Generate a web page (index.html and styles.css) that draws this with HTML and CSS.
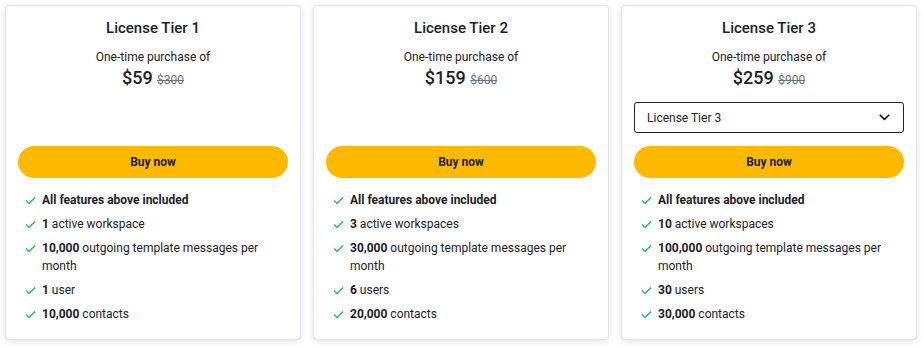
FILE: index.html
```html
<!DOCTYPE html>
<html lang="en">
<head>
    <meta charset="UTF-8">
    <title>License Tiers</title>
    <link rel="stylesheet" href="styles.css">
</head>
<body>
    <div class="tiers">
        <div class="tier">
            <h2 class="tier-title">License Tier 1</h2>
            <p class="tier-sub">One-time purchase of</p>
            <div class="tier-price">$59 <s>$300</s></div>
            <div class="tier-slot"></div>
            <button class="buy">Buy now</button>
            <ul class="features">
                <li><svg class="tick" viewBox="0 0 11 9"><path d="M1 4.6 4 7.6 10 1.4"/></svg><span><b>All features above included</b></span></li>
                <li><svg class="tick" viewBox="0 0 11 9"><path d="M1 4.6 4 7.6 10 1.4"/></svg><span><b>1</b> active workspace</span></li>
                <li><svg class="tick" viewBox="0 0 11 9"><path d="M1 4.6 4 7.6 10 1.4"/></svg><span><b>10,000</b> outgoing template messages per month</span></li>
                <li><svg class="tick" viewBox="0 0 11 9"><path d="M1 4.6 4 7.6 10 1.4"/></svg><span><b>1</b> user</span></li>
                <li><svg class="tick" viewBox="0 0 11 9"><path d="M1 4.6 4 7.6 10 1.4"/></svg><span><b>10,000</b> contacts</span></li>
            </ul>
        </div>

        <div class="tier">
            <h2 class="tier-title">License Tier 2</h2>
            <p class="tier-sub">One-time purchase of</p>
            <div class="tier-price">$159 <s>$600</s></div>
            <div class="tier-slot"></div>
            <button class="buy">Buy now</button>
            <ul class="features">
                <li><svg class="tick" viewBox="0 0 11 9"><path d="M1 4.6 4 7.6 10 1.4"/></svg><span><b>All features above included</b></span></li>
                <li><svg class="tick" viewBox="0 0 11 9"><path d="M1 4.6 4 7.6 10 1.4"/></svg><span><b>3</b> active workspaces</span></li>
                <li><svg class="tick" viewBox="0 0 11 9"><path d="M1 4.6 4 7.6 10 1.4"/></svg><span><b>30,000</b> outgoing template messages per month</span></li>
                <li><svg class="tick" viewBox="0 0 11 9"><path d="M1 4.6 4 7.6 10 1.4"/></svg><span><b>6</b> users</span></li>
                <li><svg class="tick" viewBox="0 0 11 9"><path d="M1 4.6 4 7.6 10 1.4"/></svg><span><b>20,000</b> contacts</span></li>
            </ul>
        </div>

        <div class="tier">
            <h2 class="tier-title">License Tier 3</h2>
            <p class="tier-sub">One-time purchase of</p>
            <div class="tier-price">$259 <s>$900</s></div>
            <div class="tier-slot">
                <div class="picker">
                    <span>License Tier 3</span>
                    <svg width="11" height="7" viewBox="0 0 11 7"><path d="M1.2 1.2 5.5 5.4l4.3-4.2" fill="none" stroke="#111" stroke-width="1.6" stroke-linecap="round" stroke-linejoin="round"/></svg>
                </div>
            </div>
            <button class="buy">Buy now</button>
            <ul class="features">
                <li><svg class="tick" viewBox="0 0 11 9"><path d="M1 4.6 4 7.6 10 1.4"/></svg><span><b>All features above included</b></span></li>
                <li><svg class="tick" viewBox="0 0 11 9"><path d="M1 4.6 4 7.6 10 1.4"/></svg><span><b>10</b> active workspaces</span></li>
                <li><svg class="tick" viewBox="0 0 11 9"><path d="M1 4.6 4 7.6 10 1.4"/></svg><span><b>100,000</b> outgoing template messages per month</span></li>
                <li><svg class="tick" viewBox="0 0 11 9"><path d="M1 4.6 4 7.6 10 1.4"/></svg><span><b>30</b> users</span></li>
                <li><svg class="tick" viewBox="0 0 11 9"><path d="M1 4.6 4 7.6 10 1.4"/></svg><span><b>30,000</b> contacts</span></li>
            </ul>
        </div>
    </div>
</body>
</html>
```

FILE: styles.css
```css
:root {
    --text: #1b2128;
    --muted: #6b7280;
    --yellow: #ffba00;
    --green: #22c55e;
    --border: #e4e4ec;
}

* {
    margin: 0;
    padding: 0;
    box-sizing: border-box;
    font-family: Roboto, "Liberation Sans", sans-serif;
}

body {
    background: #fff;
    color: var(--text);
    padding: 5px;
}

.tiers {
    display: grid;
    grid-template-columns: repeat(3, 296px);
    gap: 12px;
}

.tier {
    background: #fff;
    border: 1px solid var(--border);
    border-radius: 4px;
    box-shadow: 0 2px 6px rgba(40, 40, 80, 0.12);
    padding: 12px 12px 0;
    display: flex;
    flex-direction: column;
    height: 335px;
}

.tier > * {
    flex-shrink: 0;
}

.tier-title {
    text-align: center;
    font-size: 15px;
    font-weight: 500;
    line-height: 20px;
    margin-bottom: 10px;
}

.tier-sub {
    text-align: center;
    font-size: 12px;
    line-height: 18px;
}

.tier-price {
    text-align: center;
    font-size: 18px;
    font-weight: 500;
    line-height: 24px;
}

.tier-price s {
    font-size: 12px;
    font-weight: 400;
    color: var(--muted);
}

.tier-slot {
    height: 31px;
    margin: 10px 0 13px;
}

.picker {
    height: 31px;
    border: 1px solid #222;
    border-radius: 3px;
    display: flex;
    align-items: center;
    justify-content: space-between;
    padding: 0 13px 0 12px;
    font-size: 12px;
}

.buy {
    height: 32px;
    border: none;
    border-radius: 16px;
    background: var(--yellow);
    color: var(--text);
    font-size: 12px;
    font-weight: 700;
    cursor: pointer;
}

.features {
    list-style: none;
    margin-top: 13px;
    padding-left: 7px;
}

.features li {
    display: flex;
    align-items: flex-start;
    gap: 6px;
    font-size: 12px;
    line-height: 18px;
    margin-bottom: 6px;
}

.tick {
    flex: none;
    width: 11px;
    height: 9px;
    margin-top: 5px;
    fill: none;
    stroke: var(--green);
    stroke-width: 1.4;
}
```
